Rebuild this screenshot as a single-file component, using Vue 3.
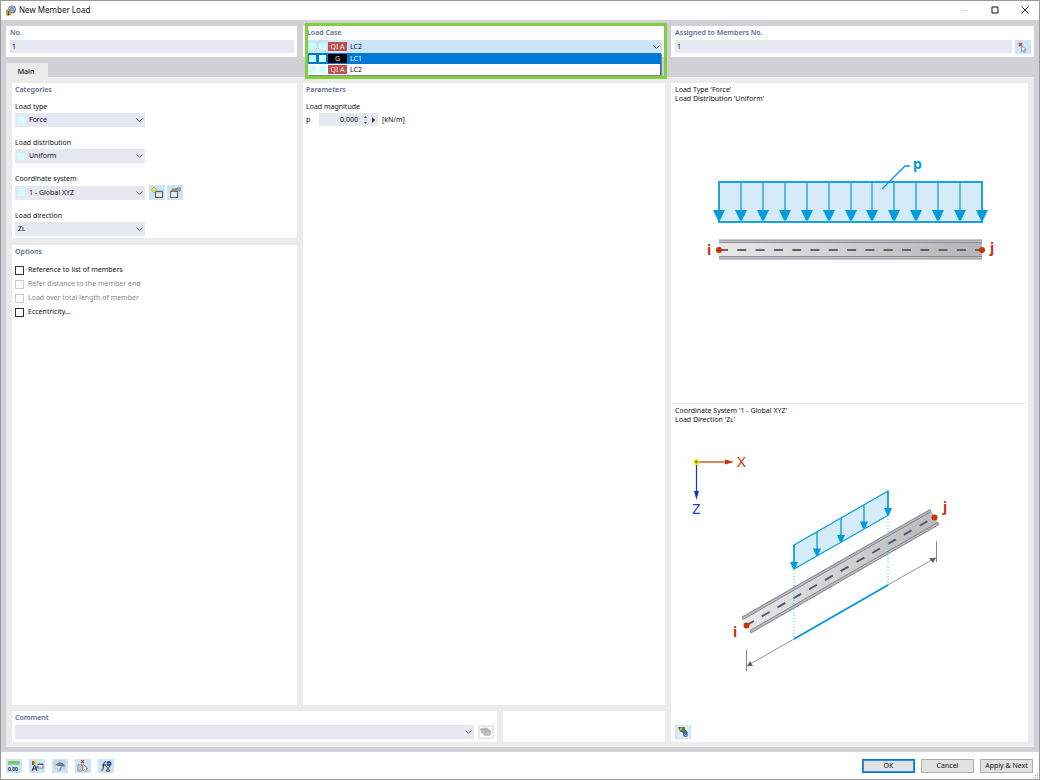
<script setup>
import { ref } from 'vue'

const no = ref('1')
const members = ref('1')
const magnitude = ref('0.000')
const comment = ref('')
const loadCase = ref('LC2')

const cases = [
  { name: 'LC1', tag: 'G', kind: 'g', active: true },
  { name: 'LC2', tag: 'QI A', kind: 'q', active: false },
]

const categories = [
  { id: 'type', label: 'Load type', value: 'Force', swatch: true },
  { id: 'dist', label: 'Load distribution', value: 'Uniform', swatch: true },
  { id: 'coord', label: 'Coordinate system', value: '1 - Global XYZ', swatch: true, tools: true },
  { id: 'dir', label: 'Load direction', value: 'Zʟ', swatch: false },
]

const options = [
  { id: 'o1', label: 'Reference to list of members', disabled: false },
  { id: 'o2', label: 'Refer distance to the member end', disabled: true },
  { id: 'o3', label: 'Load over total length of member', disabled: true },
  { id: 'o4', label: 'Eccentricity...', disabled: false },
]

const arrows = Array.from({ length: 13 }, (_, i) => 48 + Math.round(i * 21.92))
const slanted = [
  [123, 121], [146, 107.5], [170, 94], [193, 80.5], [217, 67],
]
</script>

<template>
  <div class="window">
    <header class="titlebar">
      <svg class="app-icon" width="10" height="11" viewBox="0 0 10 11">
        <circle cx="6" cy="4.5" r="3.9" fill="#5f79a5" />
        <path d="M3 3l3-2 3 3-2 3-3-1zM6 1v6M3 4h6" stroke="#c4d3ea" stroke-width=".7" fill="none" />
        <path d="M0 5l3-1 2 1v5l-3 1-2-1z" fill="#b79b50" />
        <path d="M2 6h1v4H2z" fill="#5c5034" />
      </svg>
      <h1>New Member Load</h1>
      <button class="win-btn" aria-label="Minimize"><svg width="8" height="8" viewBox="0 0 8 8"><path d="M1 4.5h6" stroke="#ddd" /></svg></button>
      <button class="win-btn" aria-label="Maximize"><svg width="8" height="8" viewBox="0 0 8 8"><path d="M1 1h6v6H1z" stroke="#111" fill="none" /></svg></button>
      <button class="win-btn" aria-label="Close"><svg width="8" height="8" viewBox="0 0 8 8"><path d="M.5.5l7 7M7.5.5l-7 7" stroke="#111" stroke-width=".9" /></svg></button>
    </header>

    <main class="work">
      <div class="top">
        <section class="panel head">
          <label class="heading" for="no">No.</label>
          <input id="no" v-model="no" class="box" />
        </section>

        <section class="panel head">
          <label class="heading" for="lc">Load Case</label>
          <div class="combo case-combo">
            <i class="swatch"></i><i class="swatch"></i><span class="tag q">QI A</span>
            <select id="lc" v-model="loadCase"><option>LC2</option><option>LC1</option></select>
            <svg class="chev" width="7" height="4" viewBox="0 0 7 4"><path d="M.5.5l3 3 3-3" /></svg>
          </div>
          <ul class="menu" role="listbox" aria-label="Load cases">
            <li v-for="c in cases" :key="c.name" role="option" :aria-selected="c.active" :class="{ active: c.active }">
              <i class="swatch"></i><i class="swatch"></i><span class="tag" :class="c.kind">{{ c.tag }}</span>{{ c.name }}
            </li>
          </ul>
          <div class="highlight"></div>
        </section>

        <section class="panel head">
          <label class="heading" for="members">Assigned to Members No.</label>
          <div class="line start">
            <input id="members" v-model="members" class="box" />
            <button class="tool" aria-label="Select members">
              <svg width="10" height="11" viewBox="0 0 10 11"><path d="M1 1l3 3M4 1L1 4" stroke="#d5343e" stroke-width="1.4" /><path d="M3.5 3.500v6l1.500-1.300 1 2.300 1.300-.6-1-2.200h2z" fill="#fff" stroke="#777" stroke-width=".7" /></svg>
            </button>
          </div>
        </section>
      </div>

      <button class="tab">Main</button>

      <div class="page">
        <div class="left-col">
          <section class="panel">
            <h2 class="heading">Categories</h2>
            <div v-for="f in categories" :key="f.id" class="field">
              <label :for="f.id">{{ f.label }}</label>
              <div class="line">
                <div class="combo cat">
                  <i v-if="f.swatch" class="swatch"></i>
                  <select :id="f.id"><option>{{ f.value }}</option></select>
                  <svg class="chev" width="7" height="4" viewBox="0 0 7 4"><path d="M.5.5l3 3 3-3" /></svg>
                </div>
                <template v-if="f.tools">
                  <button class="tool tall" aria-label="New coordinate system">
                    <svg width="12" height="12" viewBox="0 0 12 12"><rect x="4.500" y="4.500" width="7" height="6" fill="#e9e9e9" stroke="#555" /><path d="M4 4.500h8" stroke="#3f62a8" stroke-width="1.400" /><path d="M3 0v6M0 3h6M1 1l4 4M5 1L1 5" stroke="#a8a31c" stroke-width=".9" /><circle cx="3" cy="3" r="1.800" fill="#f2ec1c" /></svg>
                  </button>
                  <button class="tool tall" aria-label="Edit coordinate system">
                    <svg width="12" height="12" viewBox="0 0 12 12"><rect x="1.500" y="4.500" width="7" height="6" fill="#e9e9e9" stroke="#666" /><path d="M1.500 4l2-2.500 5-.5 1 2-3 1.500z" fill="#a8836a" /><path d="M8 1h4v2H9M10 4h1" stroke="#4770b0" fill="none" stroke-width=".9" /></svg>
                  </button>
                </template>
              </div>
            </div>
          </section>
          <section class="panel grow">
            <h2 class="heading">Options</h2>
            <div class="checks">
              <label v-for="o in options" :key="o.id" :class="{ off: o.disabled }"><input type="checkbox" :disabled="o.disabled" />{{ o.label }}</label>
            </div>
          </section>
        </div>

        <section class="panel params">
          <h2 class="heading">Parameters</h2>
          <label class="sub" for="mag">Load magnitude</label>
          <div class="line">
            <span class="sym">p</span>
            <div class="spin">
              <input id="mag" v-model="magnitude" />
              <button class="step" aria-label="Step value"><svg width="3" height="8" viewBox="0 0 3 8"><path d="M0 2l1.500-2L3 2zM0 6l1.500 2L3 6z" fill="#555" /></svg></button>
              <button class="step" aria-label="More"><svg width="3" height="6" viewBox="0 0 3 6"><path d="M0 0l3 3-3 3z" fill="#222" /></svg></button>
            </div>
            <span>[kN/m]</span>
          </div>
        </section>

        <section class="panel comment">
          <label class="heading" for="comment">Comment</label>
          <div class="line">
            <div class="combo wide">
              <select id="comment" v-model="comment"><option value=""></option></select>
              <svg class="chev" width="7" height="4" viewBox="0 0 7 4"><path d="M.5.5l3 3 3-3" /></svg>
            </div>
            <button class="tool muted" aria-label="Comment library" disabled>
              <svg width="12" height="10" viewBox="0 0 12 10"><rect width="12" height="10" fill="#fff" /><path d="M0 2l1-1 6-.5 4 3v4L9 9H5L1 5.500z" fill="#c2c2c2" /><path d="M1 2.500h5l4.500 2.500M6 2.500L5 5v3" stroke="#999" stroke-width=".6" fill="none" /></svg>
            </button>
          </div>
        </section>
        <section class="panel blank"></section>

        <section class="panel preview">
          <div class="pane">
            <p>Load Type 'Force'<br />Load Distribution 'Uniform'</p>
            <svg viewBox="0 0 357 220" role="img" aria-label="Uniform member load">
              <defs>
                <linearGradient id="beam" x1="0" x2="1" y1="0" y2="0"><stop offset="0" stop-color="#e8e8e8" /><stop offset="1" stop-color="#b5b5b5" /></linearGradient>
              </defs>
              <rect x="48" y="79" width="263" height="40" fill="#d5ecf8" stroke="#009be0" stroke-width="1.800" />
              <g v-for="x in arrows" :key="x">
                <path :d="`M${x} 79v30`" stroke="#25a5e0" stroke-width="1.400" />
                <path :d="`M${x - 6} 107h12l-5 10.500h-2z`" fill="#009be0" />
              </g>
              <path d="M211 86l23-23h5" stroke="#009be0" stroke-width="1.300" fill="none" />
              <text x="242" y="66" class="bold" fill="#009be0">p</text>
              <rect x="48" y="137" width="263" height="19" fill="url(#beam)" />
              <path d="M48 137h263v2.500H48zM48 153.500h263v2.500H48z" fill="#c4c4c8" />
              <path d="M48 137h263M48 139.500h263M48 153.500h263M48 156h263" stroke="#777783" stroke-width=".8" />
              <path d="M48 147h263" stroke="#606070" stroke-width="1.900" stroke-dasharray="9 9.300" />
              <circle cx="48" cy="147" r="3" fill="#cc3300" /><circle cx="311" cy="147" r="3" fill="#cc3300" />
              <text x="36" y="152" class="bold" fill="#cc3300">i</text>
              <text x="319" y="150" class="bold" fill="#cc3300">j</text>
            </svg>
          </div>
          <div class="pane second">
            <p>Coordinate System '1 - Global XYZ'<br />Load Direction 'Zʟ'</p>
            <svg viewBox="0 0 357 260" role="img" aria-label="Load direction in global axes">
              <defs>
                <linearGradient id="beam2" gradientUnits="userSpaceOnUse" x1="75" y1="0" x2="263" y2="0"><stop offset="0" stop-color="#e8e8e8" /><stop offset="1" stop-color="#bababa" /></linearGradient>
              </defs>
              <path d="M26 38h30" stroke="#cc3300" stroke-width="1.200" /><path d="M54 35.500l9 2.500-9 2.500z" fill="#cc3300" />
              <path d="M25.500 39v30" stroke="#1038c0" stroke-width="1.200" /><path d="M23 67h5l-2.500 9z" fill="#1038c0" />
              <circle cx="25.500" cy="38" r="3" fill="#f5e400" /><circle cx="25.500" cy="38" r="1.300" fill="#249c46" />
              <text x="66" y="43" class="axis" fill="#cc3300">X</text>
              <text x="21" y="90" class="axis" fill="#1a44cc">Z</text>

              <path d="M71 193L259 85.500L268 100L80 209z" fill="url(#beam2)" />
              <path d="M71 193L259 85.500l1 2L72 195.500zM79 206.500L267 98.500l1 2L80 209z" fill="#b8b8bc" stroke="#777783" stroke-width=".8" />
              <path d="M75 201.500L263 93.500" stroke="#55556a" stroke-width="1.900" stroke-dasharray="9 9.200" />
              <circle cx="75.500" cy="201.500" r="3" fill="#cc3300" /><circle cx="263.500" cy="93.500" r="3" fill="#cc3300" />
              <text x="62" y="213" class="bold" fill="#cc3300">i</text>
              <text x="272" y="88" class="bold" fill="#cc3300">j</text>

              <path d="M123 121L217 67v24.500L123 145z" fill="#d5ecf8" stroke="#009be0" stroke-width="1.200" />
              <g v-for="[x, y] in slanted" :key="x">
                <path :d="`M${x} ${y}v20`" stroke="#009be0" stroke-width="1.300" />
                <path :d="`M${x - 4} ${y + 17}h8l-3 7h-2z`" fill="#009be0" />
              </g>
              <path d="M123 146v69M217 92v68" stroke="#55bbea" stroke-dasharray="1 2" />
              <path d="M75 242.500L265 133.500" stroke="#777783" stroke-width=".8" />
              <path d="M123 215L217 161" stroke="#009be0" stroke-width="1.900" />
              <path d="M75.500 226v21M265.500 117v21" stroke="#777783" stroke-width=".9" />
              <path d="M76 242l3-5 3 5zM258 134h7l-3 5z" fill="#606070" />
            </svg>
            <button class="tool corner" aria-label="Display settings">
              <svg width="12" height="12" viewBox="0 0 12 12"><rect width="12" height="12" fill="#e4edf5" /><path d="M1 1h7v5H3z" fill="#4c8a3c" /><circle cx="4" cy="3" r="1.200" fill="#b6c932" /><path d="M1 1l2 0 0 2z" fill="#a23c2f" /><path d="M4 5l5-1 2 3-3 2z" fill="#53665f" /><circle cx="8.500" cy="8.500" r="2.500" fill="#3f6bab" /><path d="M7 8l2 2 2-3" stroke="#bdd2ee" fill="none" stroke-width=".7" /></svg>
            </button>
          </div>
        </section>
      </div>
    </main>

    <footer class="footer">
      <button class="tool" aria-label="Units"><svg width="14" height="12" viewBox="0 0 14 12"><path d="M1 1h12v4H1z" fill="#8fd082" /><path d="M3 1v2M5 1v2M7 1v2M9 1v2M11 1v2" stroke="#569c50" stroke-width=".6" /><text x="1" y="11" class="mini" fill="#123">0,00</text></svg></button>
      <button class="tool" aria-label="Display"><svg width="14" height="12" viewBox="0 0 14 12"><path d="M2 1h2v3H2z" fill="#d33" /><path d="M4 1h2v3H4z" fill="#eac000" /><path d="M2 3h2v2H2z" fill="#2a8a3a" /><path d="M2 11l2.500-6L7 11M3 9h3" stroke="#223" fill="none" /><rect x="8" y="4" width="5" height="4" fill="#fff" stroke="#555" stroke-width=".8" /><path d="M8 4.500h5" stroke="#2955b5" /><path d="M5 7h3" stroke="#555" /></svg></button>
      <button class="tool" aria-label="View"><svg width="14" height="12" viewBox="0 0 14 12"><path d="M2 1h10v8H8v2H5V9H2z" fill="#dbe5ec" stroke="#a5b2be" stroke-width=".6" /><path d="M2 5l4-3 4 1 2 3-3 1v-1H6z" fill="#667f9d" /><path d="M8 6l1 1-2 4-1-1z" fill="#7b8ea6" /></svg></button>
      <button class="tool" aria-label="Clear selection"><svg width="14" height="12" viewBox="0 0 14 12"><path d="M5 0l3 3M8 0L5 3" stroke="#d5343e" stroke-width="1.200" /><path d="M2 5h4v6H2zM4 6v4" fill="#fff" stroke="#666" stroke-width=".8" /><path d="M7 4v7l1.500-1.500 1.500 2 1-1-1-2h2z" fill="#fff" stroke="#777" stroke-width=".7" /></svg></button>
      <button class="tool" aria-label="Formula"><svg width="14" height="12" viewBox="0 0 14 12"><path d="M7 2C5 1 5 3 4.500 6S4 11 2 10M3 5h4" stroke="#223" fill="none" /><path d="M7 6l4 5M11 6l-4 5M7 11h4" stroke="#334" stroke-width=".9" /><circle cx="10" cy="3.500" r="2.500" fill="#34427c" /><path d="M8.500 3.500h3" stroke="#bac7ec" stroke-width=".7" /></svg></button>
      <span class="spacer"></span>
      <button class="action primary">OK</button>
      <button class="action">Cancel</button>
      <button class="action">Apply &amp; Next</button>
      <svg class="grip" width="6" height="6" viewBox="0 0 6 6"><path d="M4 0h1v1H4zM2 2h1v1H2zM4 2h1v1H4zM0 4h1v1H0zM2 4h1v1H2zM4 4h1v1H4z" fill="#aaa" /></svg>
    </footer>
  </div>
</template>

<style>
body { margin: 0; background: #fff; }
</style>

<style scoped>
.window, .window * { box-sizing: border-box; }
.window {
  min-height: 100vh; display: flex; flex-direction: column;
  border: 1px solid #999; background: #fff; color: #111;
  font: 7px/12px "Noto Sans", "Open Sans", sans-serif;
}
button, input, select { font: inherit; color: inherit; border: 0; padding: 0; margin: 0; background: none; outline: 0; border-radius: 0; }
select { appearance: none; flex: 1; min-width: 0; height: 100%; }
svg { display: block; }
h1, h2, p, ul { margin: 0; padding: 0; font-weight: 400; list-style: none; }

.titlebar { height: 19px; display: flex; align-items: center; padding: 0 5px; }
.titlebar h1 { flex: 1; margin-left: 3px; font-size: 8px; line-height: 18px; align-self: flex-start; }
.win-btn { width: 30px; height: 18px; display: flex; align-items: center; justify-content: center; align-self: flex-start; }
.win-btn:last-child { width: 18px; margin-left: 6px; }

.work { flex: 1; display: flex; flex-direction: column; background: #d0d0d5; padding: 6px 5px 5px; }
.top { display: grid; grid-template-columns: 291fr 362fr 363fr; gap: 6px; }
.panel { background: #fff; padding: 1px 3px 2px; }
.head { position: relative; height: 31px; padding-left: 4px; }
.heading { display: block; font-size: 7px; font-weight: 600; line-height: 12px; color: #5d6c8e; }
.head .heading { margin-bottom: 1px; }
.line { display: flex; align-items: center; gap: 4px; }
.start { align-items: flex-start; gap: 3px; }
.box { display: block; width: 100%; height: 13px; padding: 0 2px; background: #e7e7f1; }
.tool { flex: none; width: 16px; height: 14px; background: #cce4f7; display: flex; align-items: center; justify-content: center; }
.tool + .tool { margin-left: -2px; }
.footer .tool + .tool { margin-left: 0; }
.tall { height: 15px; }
.muted { background: #e8e8e8; }

.combo { display: flex; align-items: center; height: 14px; background: #e7e7f1; padding: 0 2px 0 3px; }
.chev { flex: none; fill: none; stroke: #666; stroke-width: 1; }
.swatch { flex: none; width: 7px; height: 7px; background: #ccffff; }
.swatch + .swatch { margin: 0 2px 0 3px; }
.tag { width: 19px; height: 9px; line-height: 9px; text-align: center; color: #eee; margin-right: 3px; }
.tag.q { background: #c0504d; }
.tag.g { background: #000; }
.case-combo { height: 13px; background: #cce4f7; margin-left: 1px; padding-left: 1px; }
.menu { position: absolute; z-index: 2; top: 27px; left: 5px; right: 4px; background: #fff; border-right: 1px solid #0078d7; box-shadow: 1px 1px 1px #888; }
.menu li { display: flex; align-items: center; height: 11px; padding-left: 1px; line-height: 11px; }
.menu .active { background: #0078d7; color: #fff; }
.highlight { position: absolute; z-index: 3; inset: -3px -2px -22px 2px; border: 3px solid #7fd13b; pointer-events: none; }

.tab { align-self: flex-start; width: 42px; height: 14px; margin-top: 6px; background: #ebebeb; padding: 3px 2px 0 0; line-height: 11px; font-weight: 500; }
.page {
  flex: 1; display: grid; gap: 6px; padding: 6px 6px 5px; background: #ebebeb;
  grid-template-columns: 285fr 194fr 162fr 357fr;
  grid-template-rows: 1fr 31px;
}
.left-col { display: flex; flex-direction: column; gap: 7px; }
.grow { flex: 1; }
.params { grid-column: 2 / 4; }
.comment { grid-column: 1 / 3; }
.comment .heading { margin-bottom: 1px; }
.blank { grid-column: 3; }
.preview { grid-column: 4; grid-row: 1 / 3; display: flex; flex-direction: column; padding: 0; }
.field { margin-bottom: 10px; }
.field:last-child { margin-bottom: 0; }
.heading + .field { margin-top: 5px; }
.field label { display: block; }
.cat { width: 130px; }
.cat .swatch { margin-right: 4px; }
.checks { margin-top: 5px; }
.checks label { display: flex; align-items: center; height: 14px; gap: 4px; }
.checks input { appearance: none; width: 9px; height: 9px; border: 1px solid #333; background: #fff; }
.off { color: #8a8a8a; }
.checks .off input { border-color: #ccc; }
.sub { display: block; margin: 5px 0 0; }
.sym { width: 9px; }
.spin { display: flex; align-items: center; width: 59px; height: 13px; background: #e7e7f1; }
.spin input { width: 39px; text-align: right; }
.step { width: 8px; display: flex; justify-content: center; margin-left: 3px; }
.step + .step { margin-left: 0; }
.wide { flex: 1; }

.pane { flex: 320 1 0; min-height: 0; }
.pane p { padding: 2px 4px 0; line-height: 9px; }
.pane > svg { width: 100%; height: auto; }
.second { flex: 339 1 0; display: flex; flex-direction: column; border-top: 1px solid #ebebeb; }
.corner { margin: auto 0 3px 4px; }
.bold { font: 700 14px "Noto Sans", sans-serif; }
.axis { font: 15px "Noto Sans", sans-serif; }
.mini { font: 600 5px "Noto Sans", sans-serif; }

.footer { position: relative; display: flex; align-items: center; height: 27px; padding: 0 6px 0 5px; gap: 7px; }
.spacer { flex: 1; }
.action { width: 53px; height: 14px; border: 1px solid #adadad; background: #e1e1e1; line-height: 11px; white-space: nowrap; }
.action + .action { margin-left: -1px; }
.primary { border: 1px solid #0078d7; box-shadow: inset 0 0 0 1px #3390dd; }
.grip { position: absolute; right: 0; bottom: 0; }
</style>
